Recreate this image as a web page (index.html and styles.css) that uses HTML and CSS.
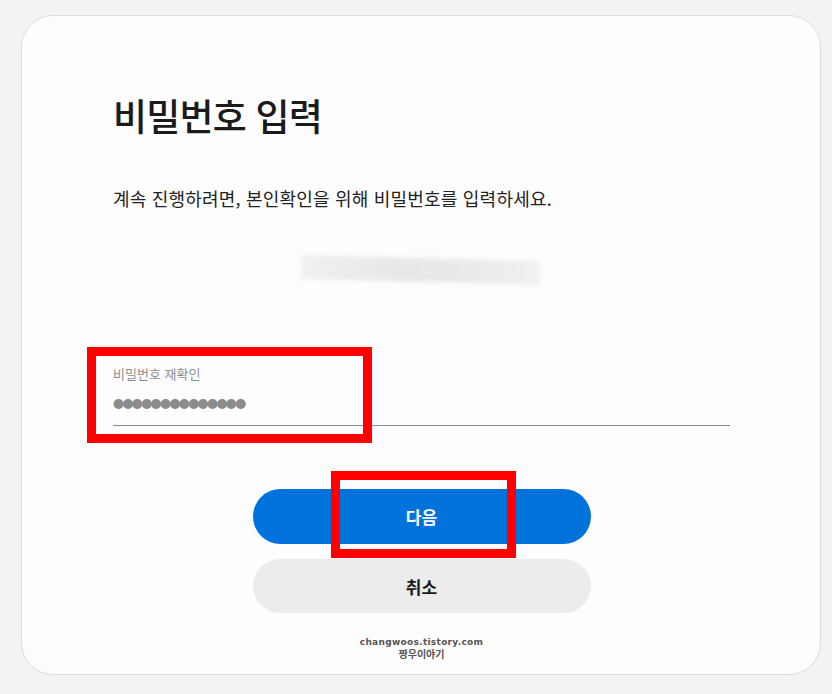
FILE: index.html
```html
<!DOCTYPE html>
<html lang="ko">
<head>
  <meta charset="UTF-8">
  <meta name="viewport" content="width=device-width, initial-scale=1.0">
  <title>비밀번호 입력</title>
  <link rel="stylesheet" href="styles.css">
</head>
<body>

<div class="card">
  <h1 class="title">비밀번호 입력</h1>
  <p class="desc">계속 진행하려면, 본인확인을 위해 비밀번호를 입력하세요.</p>

  <div class="account"><span class="blur"></span></div>

  <div class="field">
    <label class="field-label">비밀번호 재확인</label>
    <div class="field-value">●●●●●●●●●●●●●●</div>
    <span class="mark mark-field"></span>
  </div>

  <div class="buttons">
    <button class="btn btn-primary">다음<span class="mark mark-btn"></span></button>
    <button class="btn btn-cancel">취소</button>
  </div>

  <div class="watermark">
    <div class="wm-url">changwoos.tistory.com</div>
    <div class="wm-name">짱우이야기</div>
  </div>
</div>

</body>
</html>
```

FILE: styles.css
```css
body {
  margin: 0;
  background-color: #f3f3f3;
  font-family: "Noto Sans CJK KR", "Noto Sans", sans-serif;
  color: #1f1f1f;
}

.card {
  box-sizing: border-box;
  width: 800px;
  height: 660px;
  margin: 15px 0 0 21px;
  padding: 74px 90px 0 91px;
  background-color: #fdfdfd;
  border: 1px solid #dcdcdc;
  border-radius: 32px;
}

.title {
  margin: 0;
  font-size: 37px;
  font-weight: 500;
  line-height: 50px;
  letter-spacing: -0.8px;
  color: #1b1b1b;
}

.desc {
  margin: 45px 0 0;
  font-size: 18px;
  line-height: 26px;
  letter-spacing: 0.2px;
  color: #222;
}

.account {
  display: flex;
  justify-content: center;
  margin: 42px 0 0;
  height: 34px;
}

.blur {
  display: block;
  width: 238px;
  height: 24px;
  margin-top: 5px;
  margin-left: -2px;
  background: linear-gradient(90deg, #f0f0f0, #e8e8e8 40%, #eaeaea 70%, #f1f1f1);
  filter: blur(2px);
  transform: rotate(1.5deg);
}

.field {
  position: relative;
  margin-top: 77px;
  border-bottom: 1px solid #8a8a8a;
  padding-bottom: 12px;
}

.field-label {
  display: block;
  font-size: 13px;
  line-height: 20px;
  color: #8e8e8e;
}

.field-value {
  margin-top: 9px;
  font-size: 11px;
  line-height: 20px;
  letter-spacing: -1.6px;
  color: #8c8c8c;
}

.mark {
  position: absolute;
  border: 9px solid #ff0000;
  pointer-events: none;
}

.mark-field {
  left: -26px;
  top: -17px;
  width: 267px;
  height: 78px;
}

.buttons {
  display: flex;
  flex-direction: column;
  align-items: center;
  gap: 15px;
  margin-top: 63px;
}

.btn {
  position: relative;
  width: 338px;
  height: 55px;
  border: none;
  border-radius: 28px;
  font-family: inherit;
  font-size: 17px;
  font-weight: 700;
  cursor: pointer;
}

.btn-primary {
  background-color: #0072dc;
  color: #fff;
}

.btn-cancel {
  height: 54px;
  background-color: #ececec;
  color: #1a1a1a;
}

.mark-btn {
  left: 78px;
  top: -18px;
  width: 167px;
  height: 69px;
}

.watermark {
  margin-top: 24px;
  text-align: center;
  color: #555;
  font-weight: 700;
}

.wm-url {
  font-family: "DejaVu Sans", sans-serif;
  font-size: 9px;
  line-height: 11px;
  letter-spacing: 0.3px;
}

.wm-name {
  font-size: 10px;
  line-height: 11px;
}
```
